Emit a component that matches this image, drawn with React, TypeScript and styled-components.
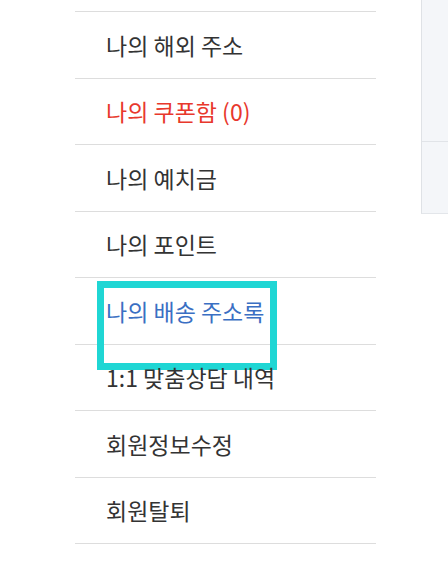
import React from "react";
import styled, { createGlobalStyle } from "styled-components";

const GlobalStyle = createGlobalStyle`
  html, body {
    margin: 0;
    padding: 0;
    background: #ffffff;
    overflow: hidden;
  }
  body {
    font-family: "Noto Sans CJK KR", "Noto Sans", sans-serif;
  }
`;

type Tone = "default" | "red" | "blue";

const toneColor: Record<Tone, string> = {
  default: "#333333",
  red: "#e8382c",
  blue: "#3a6fc3",
};

const Page = styled.div`
  display: flex;
  align-items: flex-start;
  width: 448px;
  height: 583px;
  overflow: hidden;
`;

const Menu = styled.ul`
  list-style: none;
  margin: 11px 0 0 75px;
  padding: 0;
  width: 301px;
  flex-shrink: 0;
  border-top: 1px solid #dddddd;
`;

const MenuItem = styled.li<{ tone: Tone }>`
  position: relative;
  display: flex;
  align-items: center;
  height: 66.5px;
  box-sizing: border-box;
  border-bottom: 1px solid #dddddd;
  padding-left: 31px;
  font-size: 23px;
  color: ${({ tone }) => toneColor[tone]};
`;

const Highlight = styled.span`
  position: absolute;
  left: 22px;
  top: 3px;
  width: 180px;
  height: 89px;
  box-sizing: border-box;
  border: 7px solid #1fd6d4;
  pointer-events: none;
`;

const SidePanel = styled.div`
  margin-left: 45px;
  flex: 1;
  display: flex;
  flex-direction: column;
  background: #f4f6f9;
  border-left: 1px solid #dfe2e6;
  border-bottom: 1px solid #e3e6ea;
`;

const PanelBlock = styled.div<{ h: number; divider?: boolean }>`
  height: ${({ h }) => h}px;
  border-bottom: ${({ divider }) => (divider ? "1px solid #e1e4e8" : "none")};
`;

const items: { label: string; tone: Tone; marked?: boolean }[] = [
  { label: "나의 해외 주소", tone: "default" },
  { label: "나의 쿠폰함 (0)", tone: "red" },
  { label: "나의 예치금", tone: "default" },
  { label: "나의 포인트", tone: "default" },
  { label: "나의 배송 주소록", tone: "blue", marked: true },
  { label: "1:1 맞춤상담 내역", tone: "default" },
  { label: "회원정보수정", tone: "default" },
  { label: "회원탈퇴", tone: "default" },
];

export default function App() {
  return (
    <>
      <GlobalStyle />
      <Page>
        <Menu>
          {items.map((item) => (
            <MenuItem key={item.label} tone={item.tone}>
              {item.label}
              {item.marked && <Highlight />}
            </MenuItem>
          ))}
        </Menu>
        <SidePanel>
          <PanelBlock h={141} divider />
          <PanelBlock h={71} />
        </SidePanel>
      </Page>
    </>
  );
}
